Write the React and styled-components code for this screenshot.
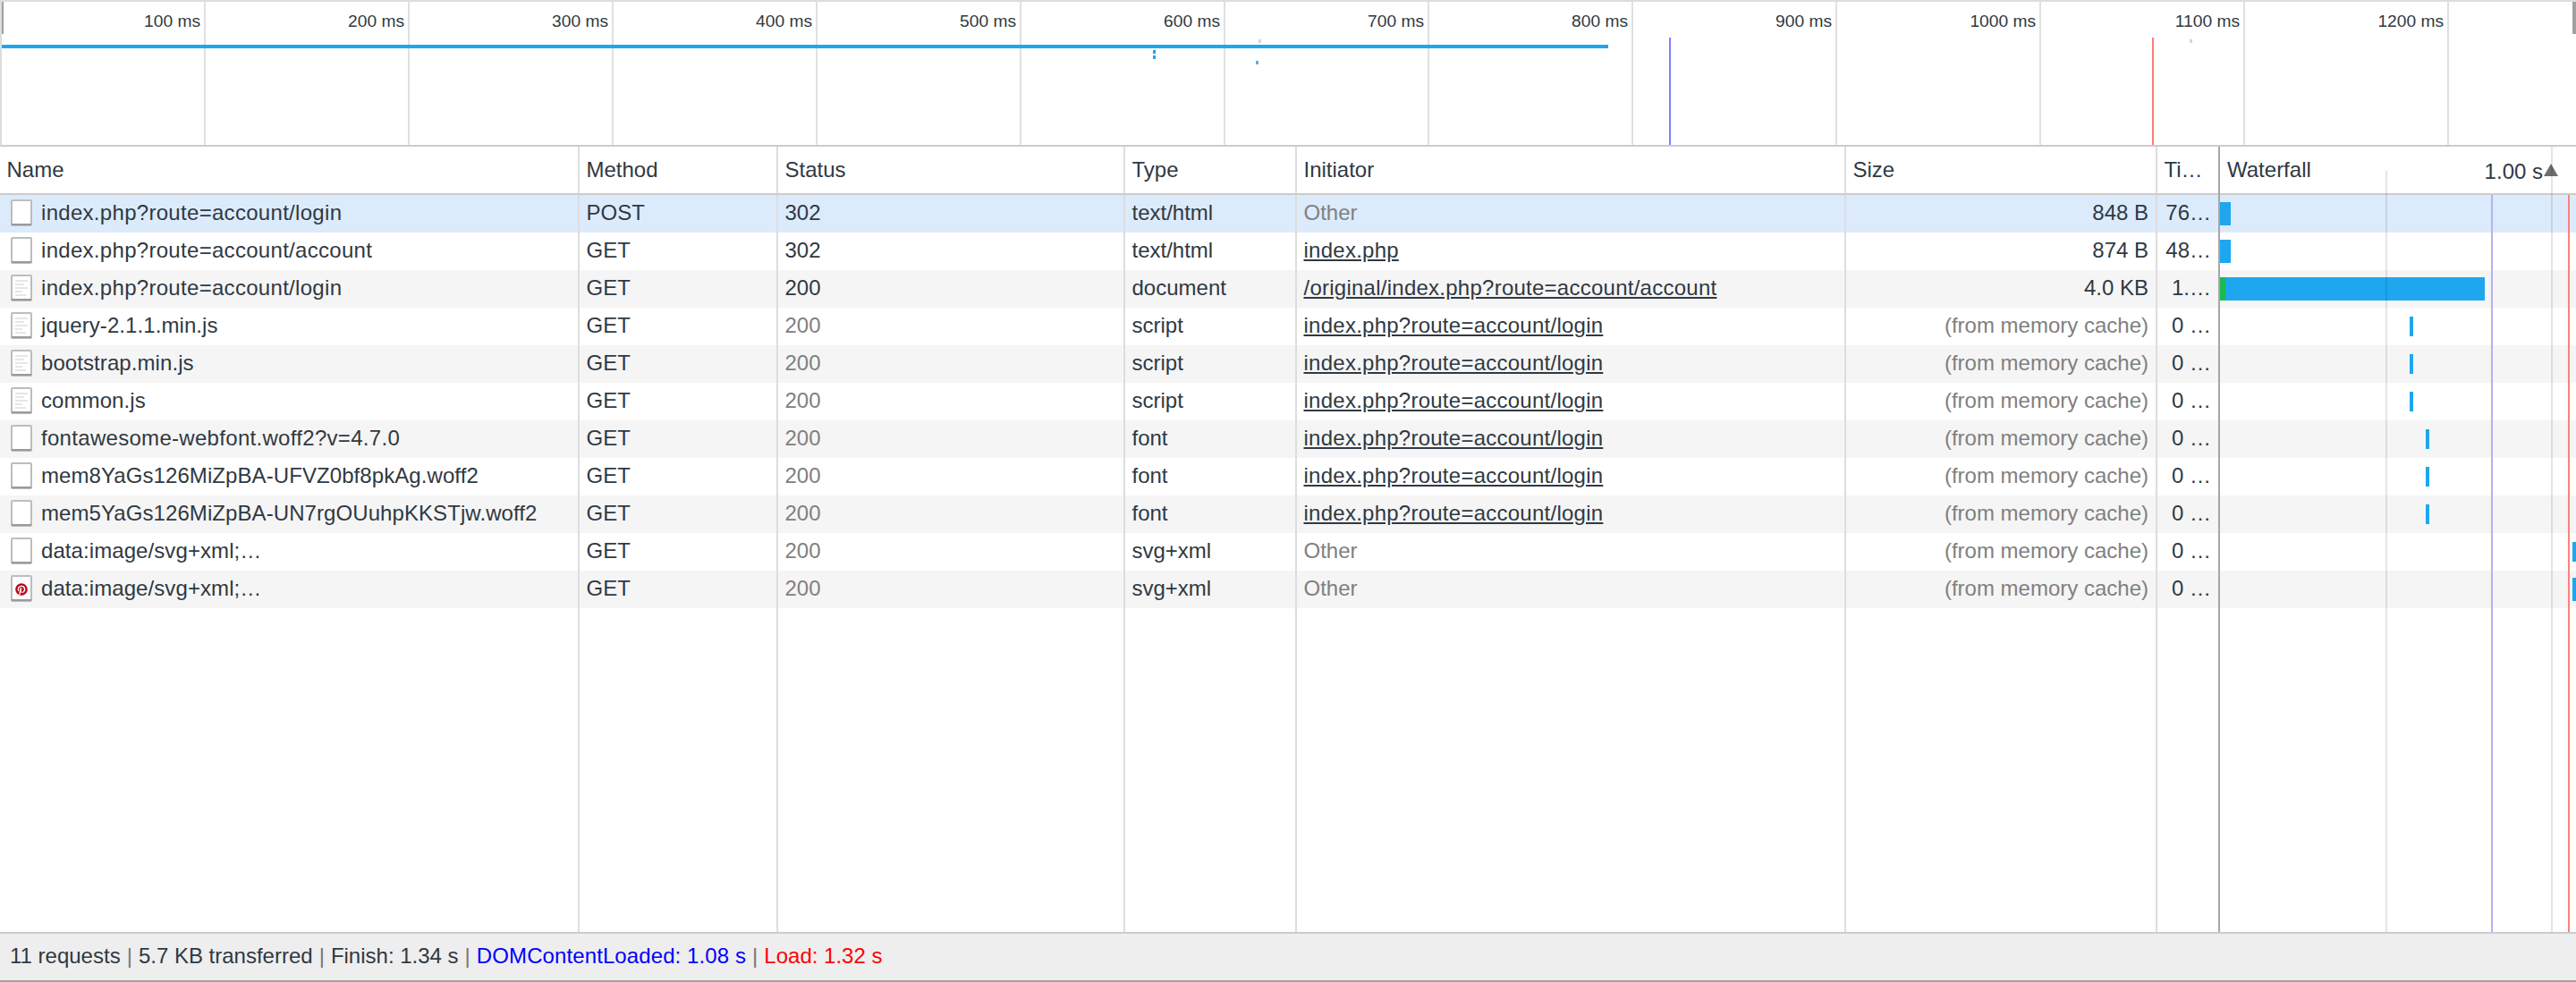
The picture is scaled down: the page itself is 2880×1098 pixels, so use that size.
import React from "react";
import styled, { createGlobalStyle } from "styled-components";
import { FaPinterest } from "react-icons/fa";

const GlobalStyle = createGlobalStyle`
    html, body {
        margin: 0;
        padding: 0;
        background: #fff;
    }
    body {
        font-family: "Liberation Sans", Arial, sans-serif;
        font-size: 24px;
        color: #303942;
    }
`;

const columns = [
    { key: "name", title: "Name", width: 648 },
    { key: "method", title: "Method", width: 222 },
    { key: "status", title: "Status", width: 388 },
    { key: "type", title: "Type", width: 192 },
    { key: "initiator", title: "Initiator", width: 614 },
    { key: "size", title: "Size", width: 348 },
    { key: "time", title: "Ti…", width: 68 },
];

const ticks = [
    "100 ms", "200 ms", "300 ms", "400 ms", "500 ms", "600 ms",
    "700 ms", "800 ms", "900 ms", "1000 ms", "1100 ms", "1200 ms",
];

const login = "index.php?route=account/login";

const requests = [
    { name: login, method: "POST", status: "302", type: "text/html", initiator: "Other", size: "848 B", time: "76…", selected: true, bars: [{ left: 2, width: 12 }], barH: 26 },
    { name: "index.php?route=account/account", method: "GET", status: "302", type: "text/html", initiator: "index.php", link: true, size: "874 B", time: "48…", bars: [{ left: 2, width: 12 }], barH: 26 },
    { name: login, method: "GET", status: "200", type: "document", initiator: "/original/index.php?route=account/account", link: true, size: "4.0 KB", time: "1.…", lines: true, bars: [{ left: 2, width: 6, green: true }, { left: 8, width: 290 }], barH: 26 },
    { name: "jquery-2.1.1.min.js", method: "GET", status: "200", cached: true, type: "script", initiator: login, link: true, size: "(from memory cache)", time: "0 …", lines: true, bars: [{ left: 214, width: 4 }], barH: 22 },
    { name: "bootstrap.min.js", method: "GET", status: "200", cached: true, type: "script", initiator: login, link: true, size: "(from memory cache)", time: "0 …", lines: true, bars: [{ left: 214, width: 4 }], barH: 22 },
    { name: "common.js", method: "GET", status: "200", cached: true, type: "script", initiator: login, link: true, size: "(from memory cache)", time: "0 …", lines: true, bars: [{ left: 214, width: 4 }], barH: 22 },
    { name: "fontawesome-webfont.woff2?v=4.7.0", method: "GET", status: "200", cached: true, type: "font", initiator: login, link: true, size: "(from memory cache)", time: "0 …", bars: [{ left: 232, width: 4 }], barH: 22 },
    { name: "mem8YaGs126MiZpBA-UFVZ0bf8pkAg.woff2", method: "GET", status: "200", cached: true, type: "font", initiator: login, link: true, size: "(from memory cache)", time: "0 …", bars: [{ left: 232, width: 4 }], barH: 22 },
    { name: "mem5YaGs126MiZpBA-UN7rgOUuhpKKSTjw.woff2", method: "GET", status: "200", cached: true, type: "font", initiator: login, link: true, size: "(from memory cache)", time: "0 …", bars: [{ left: 232, width: 4 }], barH: 22 },
    { name: "data:image/svg+xml;…", method: "GET", status: "200", cached: true, type: "svg+xml", initiator: "Other", size: "(from memory cache)", time: "0 …", bars: [{ left: 396, width: 4 }], barH: 22 },
    { name: "data:image/svg+xml;…", method: "GET", status: "200", cached: true, type: "svg+xml", initiator: "Other", size: "(from memory cache)", time: "0 …", pin: true, bars: [{ left: 396, width: 4 }], barH: 26 },
];

function FileIcon({ lines, pin }) {
    return (
        <svg width="24" height="30" viewBox="0 0 24 30">
            <rect x="1" y="1" width="22" height="28" rx="1" fill="#fff" stroke="#bdbdbd" strokeWidth="2" />
            <rect x="1" y="27" width="22" height="2" fill="#9a9a9a" />
            {lines && (
                <g fill="#e6e6e6">
                    <rect x="5" y="6" width="14" height="2" />
                    <rect x="5" y="10" width="10" height="2" />
                    <rect x="5" y="14" width="14" height="2" />
                    <rect x="5" y="18" width="8" height="2" />
                    <rect x="5" y="22" width="12" height="2" />
                </g>
            )}
            {pin && <FaPinterest x="5" y="9" size={14} color="#bd081c" />}
        </svg>
    );
}

export default function App() {
    return (
        <Page>
            <GlobalStyle />
            <Overview>
                {ticks.map((t) => (
                    <Tick key={t}><TickLabel>{t}</TickLabel></Tick>
                ))}
                <HandleLeft />
                <HandleRight />
                <LoadBar />
                <Speck $x={1289} $y={56} $h={4} $c="#1ea7ef" />
                <Speck $x={1289} $y={62} $h={4} $c="#1ea7ef" />
                <Speck $x={1404} $y={68} $h={4} $c="#5bb0dc" />
                <Speck $x={1407} $y={44} $h={4} $c="#d6d6d6" />
                <Speck $x={2448} $y={44} $h={4} $c="#d6d6d6" />
                <Marker $x={1866} $c="#8080ff" />
                <Marker $x={2406} $c="#ff7b7b" />
            </Overview>
            <Table>
                <HeaderRow>
                    {columns.map((c, i) => (
                        <HeadCell key={c.key} $w={c.width} $last={i === columns.length - 1}>{c.title}</HeadCell>
                    ))}
                    <WaterfallHead>
                        Waterfall
                        <ScaleLabel>1.00 s</ScaleLabel>
                        <SortArrow />
                    </WaterfallHead>
                </HeaderRow>
                <Rows>
                    {requests.map((r, i) => (
                        <Row key={i} $selected={r.selected} $odd={i % 2 === 0}>
                            <NameCell $w={648}>
                                <FileIcon lines={r.lines} pin={r.pin} />
                                <NameText $wide={r.name.startsWith("index") || r.name.startsWith("font")}>{r.name}</NameText>
                            </NameCell>
                            <Cell $w={222}>{r.method}</Cell>
                            <Cell $w={388} $muted={r.cached}>{r.status}</Cell>
                            <Cell $w={192}>{r.type}</Cell>
                            <Cell $w={614} $muted={r.initiator === "Other"} $link={r.link}>{r.initiator}</Cell>
                            <Cell $w={348} $right $muted={r.cached}>{r.size}</Cell>
                            <Cell $w={68} $right $last>{r.time}</Cell>
                            <WaterCell>
                                {r.bars.map((b, j) => (
                                    <Bar key={j} $green={b.green} $h={r.barH} style={{ left: b.left, width: b.width }} />
                                ))}
                            </WaterCell>
                        </Row>
                    ))}
                    <Filler>
                        {columns.map((c, i) => (
                            <FillCell key={c.key} $w={c.width} $last={i === columns.length - 1} />
                        ))}
                    </Filler>
                    <WaterLine $x={2667} $top={-27} $c="rgba(0,0,0,0.1)" />
                    <WaterLine $x={2852} $top={-54} $c="rgba(0,0,0,0.1)" />
                    <WaterLine $x={2785} $top={0} $c="#b3b3f2" />
                    <WaterLine $x={2871} $top={0} $c="#ff8080" />
                    <SplitLine />
                </Rows>
            </Table>
            <StatusBar>
                <span>11 requests</span><Sep>|</Sep>
                <span>5.7 KB transferred</span><Sep>|</Sep>
                <span>Finish: 1.34 s</span><Sep>|</Sep>
                <Blue>DOMContentLoaded: 1.08 s</Blue><Sep>|</Sep>
                <Red>Load: 1.32 s</Red>
            </StatusBar>
        </Page>
    );
}

const Page = styled.div`
    width: 2880px;
    height: 1098px;
    display: flex;
    flex-direction: column;
    overflow: hidden;
`;

const Overview = styled.div`
    position: relative;
    flex: none;
    height: 160px;
    display: flex;
    border-top: 2px solid #ddd;
    border-bottom: 2px solid #ccc;
    border-left: 2px solid #ddd;
    overflow: hidden;
`;

const Tick = styled.div`
    flex: none;
    box-sizing: border-box;
    width: 228px;
    height: 100%;
    border-right: 2px solid #e0e0e0;
    text-align: right;
    padding: 7px 4px 0 0;
    line-height: 26px;
`;

const TickLabel = styled.span`
    font-size: 19.2px;
    color: #303942;
`;

const HandleLeft = styled.div`
    position: absolute;
    left: -2px;
    top: 0;
    width: 4px;
    height: 36px;
    background: #a0a0a0;
`;

const HandleRight = styled.div`
    position: absolute;
    right: 0;
    top: 0;
    width: 4px;
    height: 36px;
    background: #a0a0a0;
`;

const LoadBar = styled.div`
    position: absolute;
    left: 0;
    top: 48px;
    width: 1796px;
    height: 4px;
    background: #1ea7ef;
`;

const Speck = styled.div`
    position: absolute;
    left: ${(p) => p.$x - 2}px;
    top: ${(p) => p.$y - 2}px;
    width: 3px;
    height: ${(p) => p.$h}px;
    background: ${(p) => p.$c};
`;

const Marker = styled.div`
    position: absolute;
    left: ${(p) => p.$x - 2}px;
    top: 40px;
    bottom: 0;
    width: 2px;
    background: ${(p) => p.$c};
`;

const Table = styled.div`
    flex: 1;
    min-height: 0;
    display: flex;
    flex-direction: column;
`;

const HeaderRow = styled.div`
    flex: none;
    height: 52px;
    display: flex;
    border-bottom: 2px solid #ccc;
`;

const HeadCell = styled.div`
    flex: none;
    box-sizing: border-box;
    width: ${(p) => p.$w}px;
    border-right: ${(p) => (p.$last ? "none" : "2px solid #ddd")};
    padding: 0 8px 0 7.5px;
    line-height: 52px;
    white-space: nowrap;
    overflow: hidden;
`;

const WaterfallHead = styled.div`
    position: relative;
    flex: 1;
    padding-left: 10px;
    line-height: 52px;
`;

const ScaleLabel = styled.span`
    position: absolute;
    right: 37px;
    top: 2px;
`;

const SortArrow = styled.div`
    position: absolute;
    right: 20px;
    top: 19px;
    width: 0;
    height: 0;
    border-left: 8px solid transparent;
    border-right: 8px solid transparent;
    border-bottom: 14px solid #6e6e6e;
`;

const Rows = styled.div`
    position: relative;
    flex: 1;
    display: flex;
    flex-direction: column;
`;

const Row = styled.div`
    flex: none;
    height: 42px;
    display: flex;
    background: ${(p) => (p.$selected ? "#dcebfc" : p.$odd ? "#f5f5f5" : "#fff")};
`;

const Cell = styled.div`
    flex: none;
    box-sizing: border-box;
    width: ${(p) => p.$w}px;
    border-right: ${(p) => (p.$last ? "none" : "2px solid #ddd")};
    padding: 0 8px 0 7.5px;
    line-height: 40px;
    white-space: nowrap;
    overflow: hidden;
    text-align: ${(p) => (p.$right ? "right" : "left")};
    color: ${(p) => (p.$muted ? "#808080" : "#303942")};
    text-decoration: ${(p) => (p.$link ? "underline" : "none")};
    letter-spacing: ${(p) => (p.$link ? "0.25px" : "0")};
`;

const NameCell = styled.div`
    flex: none;
    box-sizing: border-box;
    width: ${(p) => p.$w}px;
    border-right: 2px solid #ddd;
    display: flex;
    align-items: center;
    gap: 10px;
    padding: 0 0 2px 12px;
    line-height: 40px;
    white-space: nowrap;
`;

const NameText = styled.span`
    letter-spacing: ${(p) => (p.$wide ? "0.3px" : "0.08px")};
`;

const WaterCell = styled.div`
    position: relative;
    flex: 1;
`;

const Bar = styled.div`
    position: absolute;
    top: ${(p) => (42 - p.$h) / 2}px;
    height: ${(p) => p.$h}px;
    background: ${(p) => (p.$green ? "#1db954" : "#1ea7ef")};
`;

const Filler = styled.div`
    flex: 1;
    display: flex;
`;

const FillCell = styled.div`
    flex: none;
    box-sizing: border-box;
    width: ${(p) => p.$w}px;
    border-right: ${(p) => (p.$last ? "none" : "2px solid #ddd")};
`;

const WaterLine = styled.div`
    position: absolute;
    left: ${(p) => p.$x}px;
    top: ${(p) => p.$top}px;
    bottom: 0;
    width: 2px;
    background: ${(p) => p.$c};
`;

const SplitLine = styled.div`
    position: absolute;
    left: 2480px;
    top: -54px;
    bottom: 0;
    width: 2px;
    background: #a6a6a6;
`;

const StatusBar = styled.div`
    flex: none;
    box-sizing: border-box;
    height: 56px;
    display: flex;
    align-items: center;
    padding: 0 0 2px 11px;
    background: #eee;
    border-top: 2px solid #ccc;
    border-bottom: 2px solid #a3a3a3;
    white-space: pre;
`;

const Sep = styled.span`
    margin: 0 7px;
    color: #777;
`;

const Blue = styled.span`
    color: #00f;
    letter-spacing: 0.1px;
`;

const Red = styled.span`
    color: #f00;
`;
